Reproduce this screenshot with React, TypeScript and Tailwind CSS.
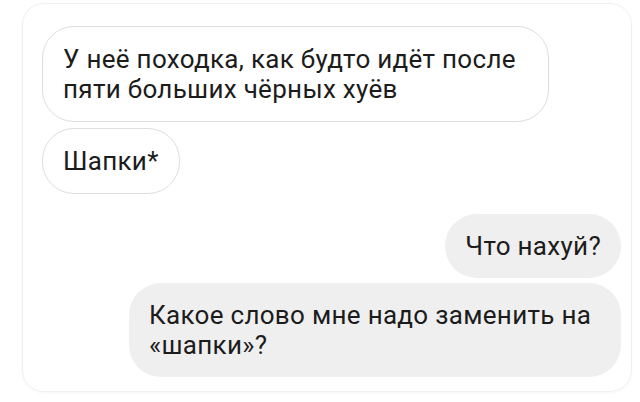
import React from "react";

type Msg = { id: number; text: string; mine: boolean; width?: string };

const messages: Msg[] = [
  { id: 1, text: "У неё походка, как будто идёт после пяти больших чёрных хуёв", mine: false, width: "w-[507px]" },
  { id: 2, text: "Шапки*", mine: false },
  { id: 3, text: "Что нахуй?", mine: true },
  { id: 4, text: "Какое слово мне надо заменить на «шапки»?", mine: true, width: "w-[492px]" },
];

const Bubble: React.FC<{ msg: Msg }> = ({ msg }) => (
  <div
    className={
      msg.mine
        ? `self-end rounded-[32px] bg-[#efefef] px-5 py-[17px] ${msg.width ?? ""}`
        : `self-start rounded-[32px] border border-[#dedede] bg-white px-5 py-[17px] ${msg.width ?? ""}`
    }
  >
    <p className="text-[26px] leading-[30px] tracking-[0.3px] text-[#1c1c1c]">{msg.text}</p>
  </div>
);

export default function App() {
  return (
    <div className="h-[402px] w-[640px] bg-white pl-[22px] pr-2 pt-[3px] font-['Roboto','Liberation_Sans',sans-serif]">
      <div className="flex h-[389px] w-[610px] flex-col rounded-[22px] border border-[#f0f0f0] pb-[14px] pl-[19px] pr-[10px] pt-[22px] shadow-[0_1px_3px_rgba(0,0,0,0.04)]">
        <div className="flex flex-col gap-[6px]">
          <Bubble msg={messages[0]} />
          <Bubble msg={messages[1]} />
        </div>
        <div className="mt-5 flex flex-col gap-[5px]">
          <Bubble msg={messages[2]} />
          <Bubble msg={messages[3]} />
        </div>
      </div>
    </div>
  );
}
